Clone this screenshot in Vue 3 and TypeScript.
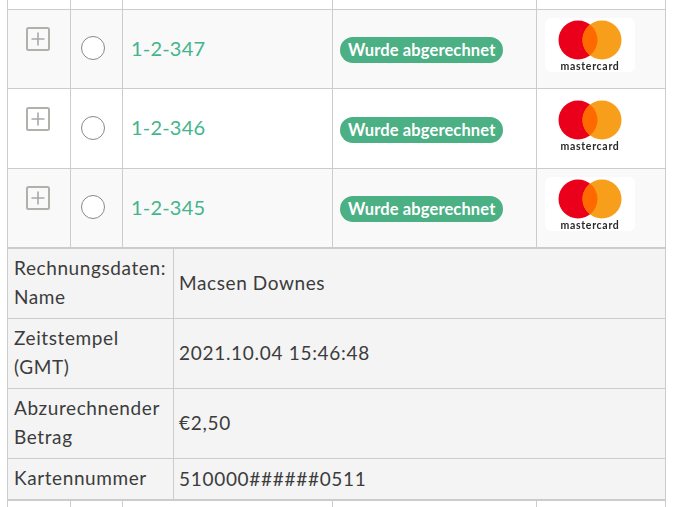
<script setup lang="ts">
interface Payment {
  id: string;
  status: string;
}

const payments: Payment[] = [
  { id: '1-2-347', status: 'Wurde abgerechnet' },
  { id: '1-2-346', status: 'Wurde abgerechnet' },
  { id: '1-2-345', status: 'Wurde abgerechnet' }
];
</script>

<template>
  <div class="page">
    <div class="row stub">
      <div class="cell"></div>
      <div class="cell"></div>
      <div class="cell"></div>
      <div class="cell"></div>
      <div class="cell"></div>
    </div>

    <div v-for="p in payments" :key="p.id" class="row">
      <div class="cell expand">
        <svg width="24" height="24" viewBox="0 0 24 24" fill="none">
          <rect x="1" y="1" width="22" height="22" rx="1.5" stroke="#b3b0ab" stroke-width="2" />
          <path d="M12 5.5v13M5.5 12h13" stroke="#a8a8a8" stroke-width="1.6" />
        </svg>
      </div>
      <div class="cell select"><span class="radio"></span></div>
      <div class="cell pay-id"><span>{{ p.id }}</span></div>
      <div class="cell status"><span class="badge">{{ p.status }}</span></div>
      <div class="cell brand">
        <div class="logo">
          <svg class="marks" width="66" height="44" viewBox="0 0 66 44">
            <circle cx="21" cy="22" r="19.5" fill="#eb001b" />
            <circle cx="45" cy="22" r="19.5" fill="#f79e1b" />
            <path d="M33 6.6a19.5 19.5 0 0 1 0 30.8a19.5 19.5 0 0 1 0-30.8z" fill="#ff6a00" />
          </svg>
          <span class="logo-text">mastercard</span>
        </div>
      </div>
    </div>

    <div class="details">
      <div class="label">Rechnungsdaten:<br />Name</div>
      <div class="value">Macsen Downes</div>
      <div class="label">Zeitstempel<br />(GMT)</div>
      <div class="value num">2021.10.04 15:46:48</div>
      <div class="label">Abzurechnender<br />Betrag</div>
      <div class="value num">€2,50</div>
      <div class="label single">Kartennummer</div>
      <div class="value num single">510000######0511</div>
    </div>

    <div class="row stub">
      <div class="cell"></div>
      <div class="cell"></div>
      <div class="cell"></div>
      <div class="cell"></div>
      <div class="cell"></div>
    </div>
  </div>
</template>

<style>
html,
body {
  background: #fff;
  overflow: hidden;
}
</style>

<style scoped>
.page {
  width: 659px;
  height: 507px;
  margin-left: 7px;
  overflow: hidden;
  font-family: Lato, "Open Sans", sans-serif;
  font-size: 19px;
  color: #3c3c3c;
  border-right: 1px solid #ccc;
  border-left: 1px solid #ccc;
  box-sizing: border-box;
}

.row {
  display: grid;
  grid-template-columns: 63px 52px 210px 204px 1fr;
  height: 79.5px;
  border-bottom: 1px solid #ccc;
  box-sizing: border-box;
}

.row:nth-child(even) {
  background: #f9f9f9;
}

.row.stub {
  height: 9.5px;
  background: #fff;
}

.details + .row.stub {
  height: 40px;
  border-bottom: 0;
}

.cell {
  border-right: 1px solid #ccc;
  display: flex;
  align-items: center;
  min-width: 0;
}

.cell:last-child {
  border-right: 0;
}

.expand {
  align-items: flex-start;
  justify-content: center;
  padding-top: 17.5px;
  padding-right: 2px;
}

.select {
  justify-content: center;
  padding-right: 8px;
}

.radio {
  width: 24px;
  height: 24px;
  box-sizing: border-box;
  border: 1px solid #888;
  border-radius: 50%;
  background: #fff;
  margin-top: -1px;
}

.pay-id {
  padding-left: 8px;
  padding-bottom: 2px;
  color: #43b58c;
  font-size: 20px;
  letter-spacing: 0.2px;
}

.status {
  padding-left: 7px;
}

.badge {
  background: #4cb085;
  color: #fff;
  font-size: 16.5px;
  font-weight: 700;
  line-height: 27px;
  height: 26px;
  padding: 0 8px;
  border-radius: 13px;
  letter-spacing: 0.12px;
  white-space: nowrap;
  margin-top: 3px;
}

.brand {
  padding-left: 8px;
}

.logo {
  width: 90px;
  height: 54px;
  background: #fff;
  border-radius: 6px;
  display: flex;
  flex-direction: column;
  align-items: center;
  margin-top: -7px;
}

.marks {
  filter: blur(0.4px);
}

.logo-text {
  font-size: 10.5px;
  font-weight: 700;
  line-height: 12px;
  color: #2a2a2a;
  filter: blur(0.5px);
  letter-spacing: 0.7px;
  margin-top: -2px;
}

.details {
  display: grid;
  grid-template-columns: 166px 1fr;
  grid-template-rows: 70px 70px 70px 40px;
  background: #f4f4f4;
  border-top: 1px solid #ccc;
  border-bottom: 2px solid #ccc;
}

.label,
.value {
  border-bottom: 1px solid #ccc;
  box-sizing: border-box;
  display: flex;
  align-items: center;
  padding-left: 6px;
  line-height: 29px;
  letter-spacing: 0.6px;
}

.label {
  display: block;
  padding-top: 4px;
  border-right: 1px solid #ccc;
}

.value {
  padding-left: 5px;
  padding-bottom: 2px;
}

.value.num {
  letter-spacing: 0.7px;
}

.single {
  border-bottom: 0;
}
</style>
